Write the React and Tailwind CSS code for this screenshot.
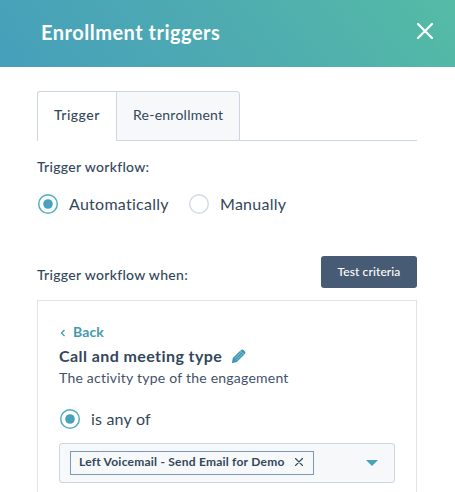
import React, { useState } from 'react';

const Radio = ({ label, checked, onChange, labelClass }) => (
  <button type="button" role="radio" aria-checked={checked} onClick={onChange} className="flex h-6 items-center whitespace-nowrap">
    <svg width="22" height="22" viewBox="0 0 22 22" className="mr-[10px] shrink-0">
      <circle cx="11" cy="11" r="9.3" fill="white" stroke={checked ? '#54adc4' : '#d3dce8'} strokeWidth="1.5" />
      {checked && <circle cx="11" cy="11" r="4.8" fill="#48a2bd" />}
    </svg>
    <span className={labelClass}>{label}</span>
  </button>
);

const Cross = ({ size, strokeWidth }) => (
  <svg width={size} height={size} viewBox="0 0 16 16" fill="none" stroke="currentColor" strokeWidth={strokeWidth} strokeLinecap="round">
    <path d="M1 1l14 14M15 1L1 15" />
  </svg>
);

const Pencil = () => (
  <svg width="15" height="15" viewBox="0 0 15 15">
    <path d="M.8 14.2l1-5.2 7.4-7.2 4 4-7.4 7.3z" fill="#3e96b0" />
    <path d="M10 1.2c.8-.8 1.8-.9 2.6-.1l1.3 1.3c.8.8.7 1.8-.1 2.6l-.6.6-4-4z" fill="#3e96b0" />
    <path d="M3.7 9.6l6-5.9M5.3 11.2l6-5.9" stroke="#a9d3df" strokeWidth=".8" />
    <path d="M9 2l4 4" stroke="#77b8ca" strokeWidth=".6" />
  </svg>
);

const App = () => {
  const [mode, setMode] = useState('auto');

  return (
    <div className="h-[492px] w-[455px] overflow-hidden bg-white font-['Lato',sans-serif] text-[#33475b]">
      {/* Header */}
      <header className="flex h-[67px] items-center justify-between bg-linear-[52deg,#469fbb,#4eacb0_52%,#55bba5] pr-[22px] pb-[3px] pl-[41px] text-white">
        <h1 className="text-[20px] leading-6 font-bold tracking-[0.5px] whitespace-nowrap">Enrollment triggers</h1>
        <button type="button" aria-label="Close" className="-mt-[2px]">
          <Cross size={16} strokeWidth={2.2} />
        </button>
      </header>

      <main className="pt-6 pr-[38px] pl-[37px]">
        {/* Tabs */}
        <div className="flex h-[50px] text-[14px] leading-[46px] whitespace-nowrap">
          <button type="button" className="w-[79px] rounded-tl-[3px] border-t border-l border-[#cbd6e2] pb-[3px] pl-4 text-left font-medium tracking-[0.5px]">
            Trigger
          </button>
          <button type="button" className="w-[124px] rounded-tr-[3px] border border-[#cbd6e2] bg-[#f6f8fa] pb-[2px] pl-4 text-left tracking-[0.25px]">
            Re-enrollment
          </button>
          <div className="flex-1 border-b border-[#cbd6e2]" />
        </div>

        <p className="mt-4 text-[14px] leading-5 font-medium tracking-[0.3px] whitespace-nowrap">Trigger workflow:</p>
        <div className="mt-[15px] flex">
          <div className="w-[151px]">
            <Radio label="Automatically" labelClass="text-[16px] tracking-[0.27px]" checked={mode === 'auto'} onChange={() => setMode('auto')} />
          </div>
          <Radio label="Manually" labelClass="text-[16px] tracking-[0.27px]" checked={mode === 'manual'} onChange={() => setMode('manual')} />
        </div>

        <div className="mt-10 flex h-8 justify-between">
          <p className="pt-[9px] text-[14px] leading-5 font-medium tracking-[0.3px] whitespace-nowrap">Trigger workflow when:</p>
          <button type="button" className="h-8 w-24 rounded-[3px] bg-[#475b74] text-[12px] font-medium tracking-[0.1px] whitespace-nowrap text-white">
            Test criteria
          </button>
        </div>

        {/* Criteria card */}
        <section className="mt-3 h-[220px] border border-[#dfe3eb] px-[21px] pt-5">
          <button type="button" className="flex h-5 items-center text-[14px] font-bold tracking-[0.1px] text-[#4598b0]">
            <svg width="14" height="8" viewBox="0 0 14 8" fill="none" stroke="currentColor" strokeWidth="1.3" className="mt-[3px]">
              <path d="M5.5 1l-3 3 3 3" />
            </svg>
            Back
          </button>
          <div className="mt-[3px] flex h-6 items-center">
            <h2 className="text-[16px] font-bold tracking-[0.42px] whitespace-nowrap">Call and meeting type</h2>
            <button type="button" aria-label="Edit" className="ml-[9px]">
              <Pencil />
            </button>
          </div>
          <p className="text-[14px] leading-5 tracking-[0.23px] whitespace-nowrap text-[#425268]">The activity type of the engagement</p>

          <div className="mt-[19px]">
            <Radio label="is any of" labelClass="text-[16px] tracking-[0.2px]" checked onChange={() => {}} />
          </div>

          <div className="mt-3 flex h-10 items-center justify-between rounded-[3px] border border-[#cbd6e2] bg-[#f6f8fa] pr-4 pl-[10px]">
            <div className="flex h-6 w-[244px] items-center justify-between border border-[#7c98b6] pr-[10px] pb-[2px] pl-2 text-[12px] font-bold whitespace-nowrap">
              <span className="tracking-[0.23px]">Left Voicemail - Send Email for Demo</span>
              <Cross size={8} strokeWidth={2.2} />
            </div>
            <svg width="12" height="6" viewBox="0 0 12 6">
              <path d="M0 0h12L6 6z" fill="#48a2bd" />
            </svg>
          </div>
        </section>
      </main>
    </div>
  );
};

export default App;
